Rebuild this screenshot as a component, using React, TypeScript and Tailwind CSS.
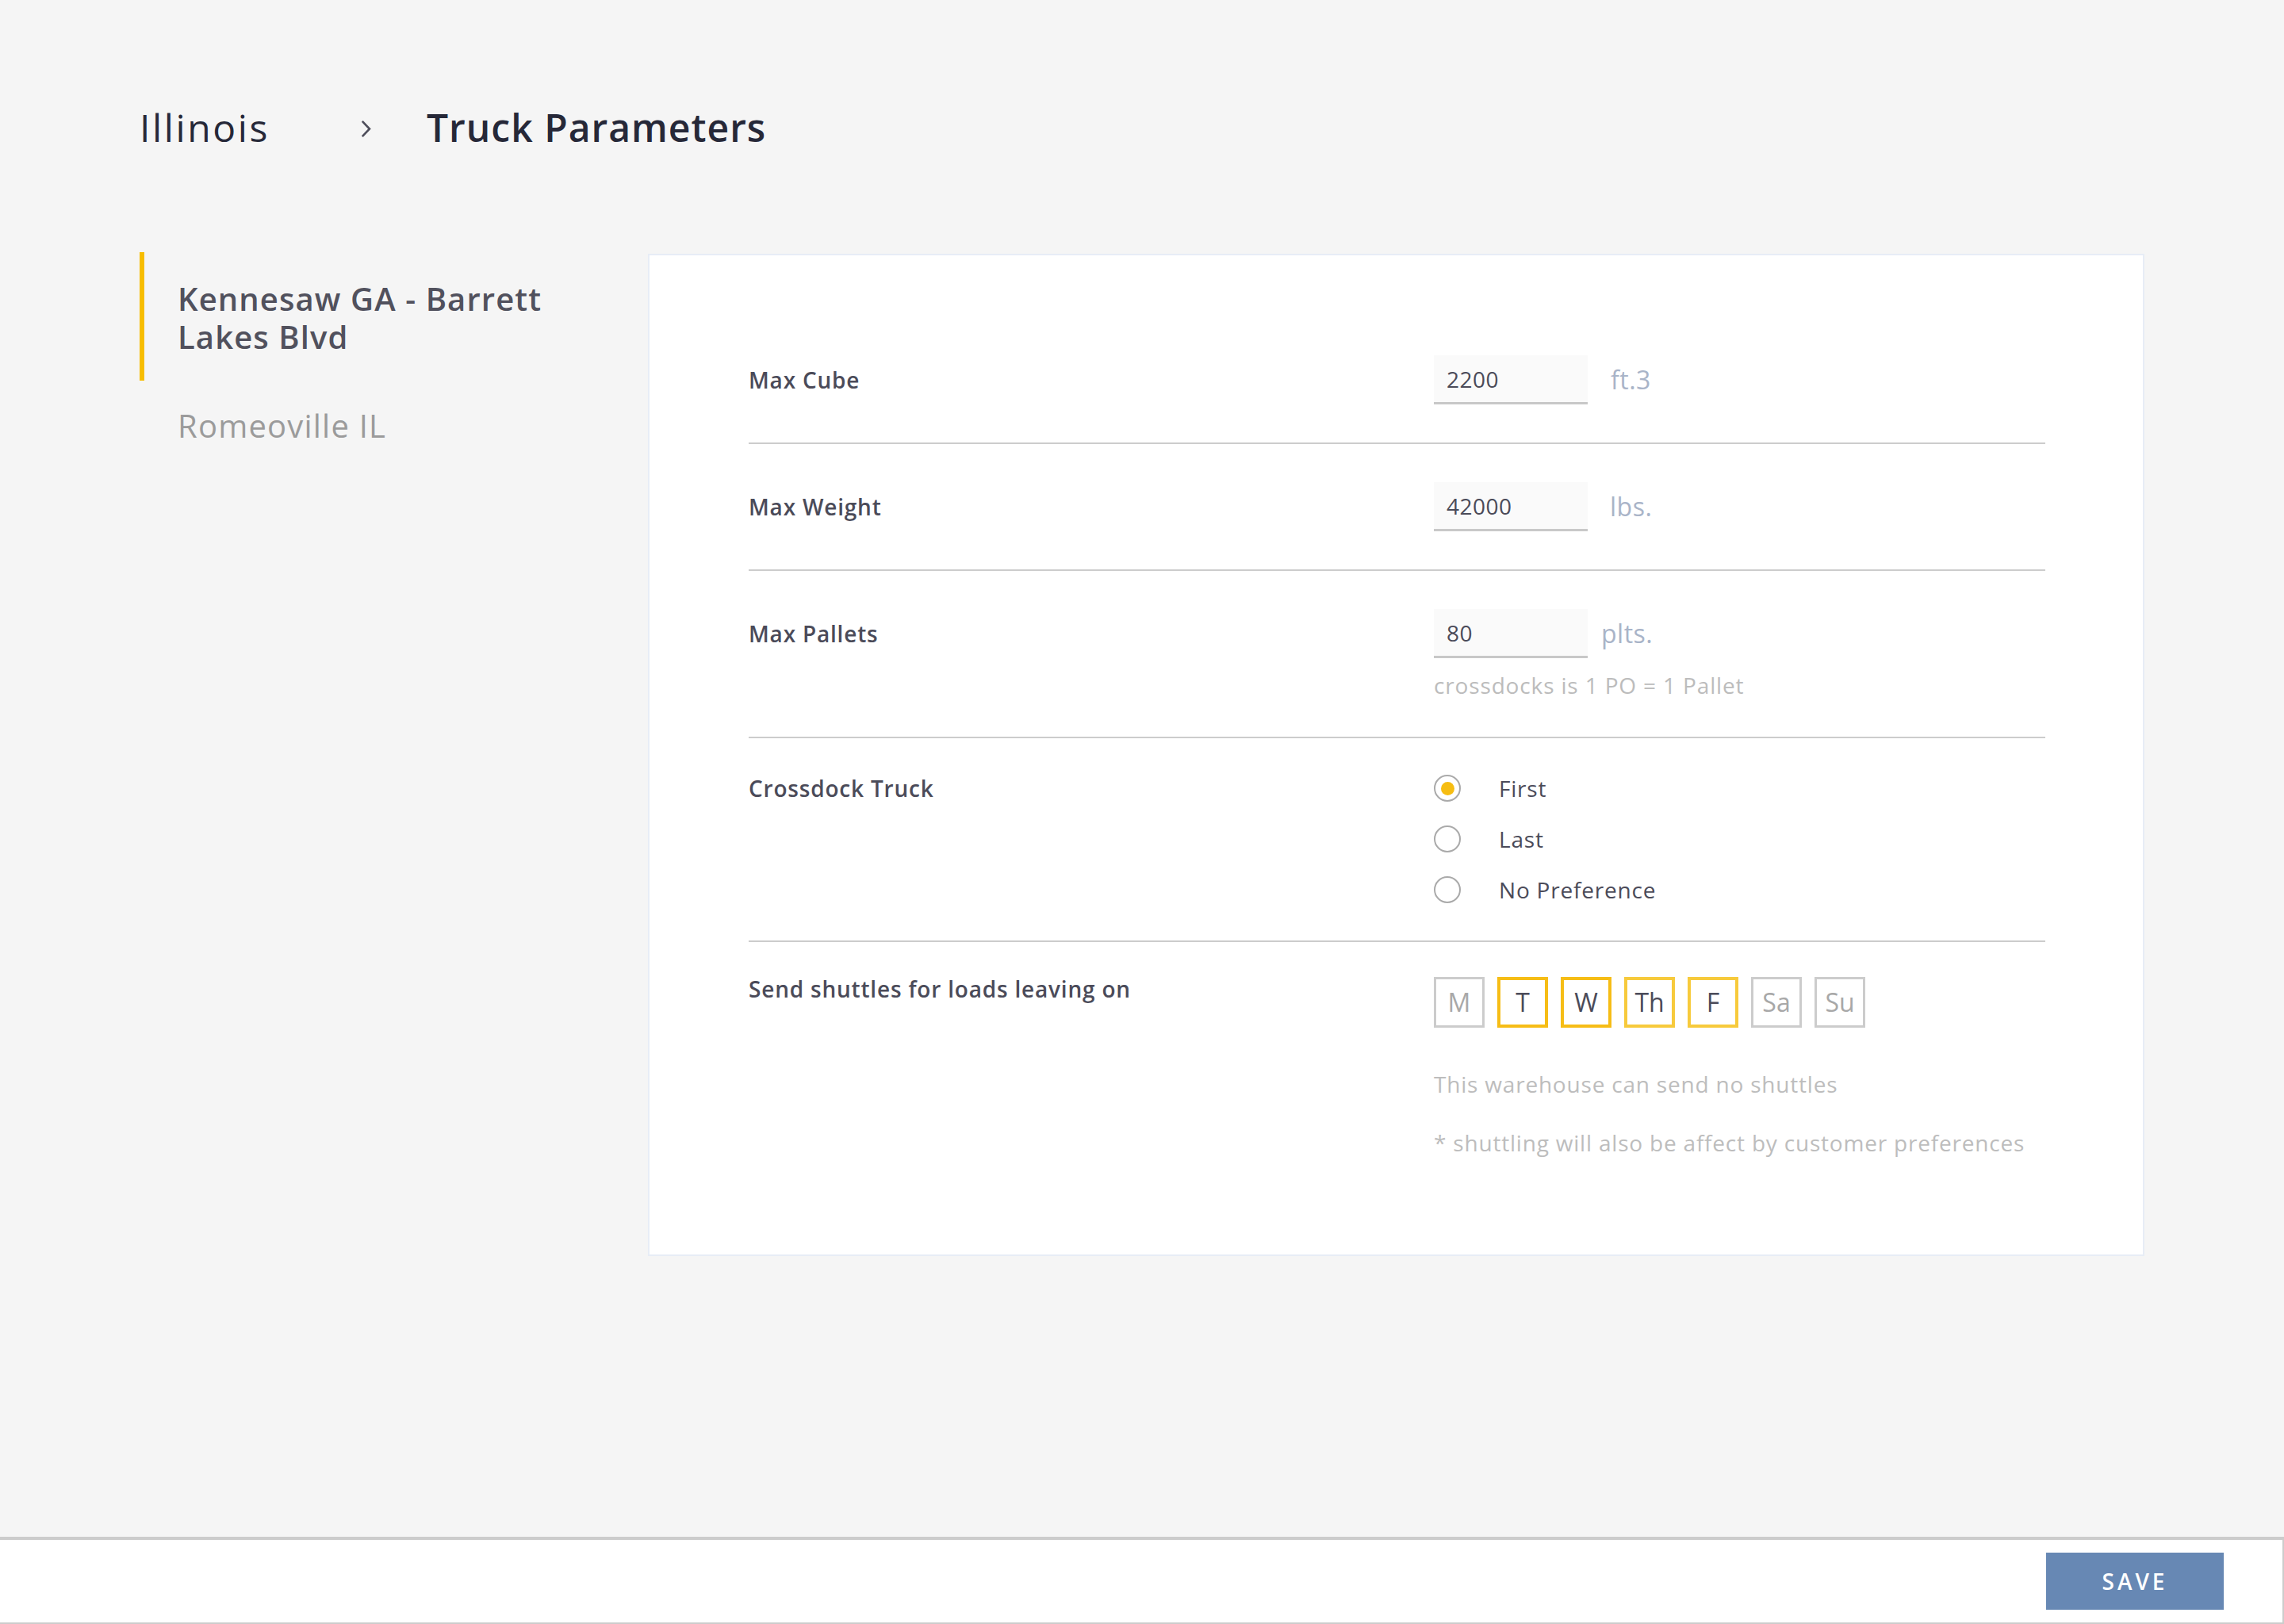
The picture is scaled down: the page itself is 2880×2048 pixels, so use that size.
import React from "react";

const days: { d: string; on: boolean; tone?: "strong" | "soft" }[] = [
  { d: "M", on: false },
  { d: "T", on: true, tone: "strong" },
  { d: "W", on: true, tone: "strong" },
  { d: "Th", on: true, tone: "soft" },
  { d: "F", on: true, tone: "soft" },
  { d: "Sa", on: false },
  { d: "Su", on: false },
];

function NumField({ value, unit, unitClass }: { value: string; unit: string; unitClass: string }) {
  return (
    <div className="flex items-center">
      <div className="w-[194px] h-[62px] bg-[#fafafa] border-b-[3px] border-[#c8c8c8] pl-[16px] flex items-center text-[28px] text-[#4b4b59] tracking-[0.5px]">
        {value}
      </div>
      <span className={`text-[32px] leading-[40px] text-[#a9b4c8] tracking-[0.5px] ${unitClass}`}>{unit}</span>
    </div>
  );
}

function Radio({ label, checked }: { label: string; checked?: boolean }) {
  return (
    <div className="h-[34px] flex items-center">
      <div className="w-[34px] h-[34px] rounded-full border-2 border-[#aaaaaa] flex items-center justify-center bg-white">
        {checked && <div className="w-[17px] h-[17px] rounded-full bg-[#f6bd12]" />}
      </div>
      <span className="ml-[48px] text-[28px] leading-[34px] text-[#4b4b59] tracking-[0.8px]">{label}</span>
    </div>
  );
}

export default function App() {
  return (
    <div className="min-h-screen flex flex-col bg-[#f5f5f5] font-['Open_Sans',sans-serif]">
      <div className="flex-1 px-[176px] pt-[129px]">
        {/* Breadcrumb */}
        <div className="h-[64px] flex items-center">
          <span className="w-[279px] text-[48px] leading-[64px] text-[#262838] tracking-[2.6px]">Illinois</span>
          <svg width="13" height="23" viewBox="0 0 13 23" className="mt-[3px]">
            <path d="M1.8 1.8 L11 11.5 L1.8 21.2" fill="none" stroke="#4d4d5a" strokeWidth="2.6" />
          </svg>
          <span className="ml-[70px] text-[48px] leading-[64px] font-semibold text-[#262838] tracking-[1px]">
            Truck Parameters
          </span>
        </div>

        <div className="flex mt-[125px]">
          {/* Sidebar */}
          <div className="w-[641px] shrink-0">
            <div className="border-l-[6px] border-[#f7bd00] pl-[42px] pt-[35px] pb-[31px]">
              <div className="max-w-[500px] text-[40px] leading-[48px] font-semibold text-[#51515d] tracking-[1.1px]">
                Kennesaw GA - Barrett Lakes Blvd
              </div>
            </div>
            <div className="pl-[48px] pt-[33px] text-[40px] leading-[48px] text-[#9b9b9b] tracking-[1.2px]">
              Romeoville IL
            </div>
          </div>

          {/* Card */}
          <div className="flex-1 mt-[2px] bg-white border-2 border-[#e7edf6] pl-[125px] pr-[123px] pt-[78px] pb-[121px]">
            {/* Max Cube */}
            <div className="flex pt-[48px] pb-[48px] border-b-2 border-[#cccccc]">
              <div className="w-[864px] shrink-0 h-[62px] flex items-center text-[28px] font-semibold text-[#4b4b59] tracking-[0.8px]">
                Max Cube
              </div>
              <NumField value="2200" unit="ft.3" unitClass="ml-[29px]" />
            </div>
            {/* Max Weight */}
            <div className="flex pt-[48px] pb-[48px] border-b-2 border-[#cccccc]">
              <div className="w-[864px] shrink-0 h-[62px] flex items-center text-[28px] font-semibold text-[#4b4b59] tracking-[0.8px]">
                Max Weight
              </div>
              <NumField value="42000" unit="lbs." unitClass="ml-[28px]" />
            </div>
            {/* Max Pallets */}
            <div className="flex pt-[48px] pb-[45px] border-b-2 border-[#cccccc]">
              <div className="w-[864px] shrink-0 h-[62px] flex items-center text-[28px] font-semibold text-[#4b4b59] tracking-[0.8px]">
                Max Pallets
              </div>
              <div className="flex flex-col">
                <NumField value="80" unit="plts." unitClass="ml-[17px]" />
                <div className="mt-[14px] text-[28px] leading-[40px] text-[#bcbcbc] tracking-[0.85px]">
                  crossdocks is 1 PO = 1 Pallet
                </div>
              </div>
            </div>
            {/* Crossdock Truck */}
            <div className="flex pt-[46px] pb-[47px] border-b-2 border-[#cccccc]">
              <div className="w-[864px] shrink-0 text-[28px] leading-[34px] font-semibold text-[#4b4b59] tracking-[0.8px]">
                Crossdock Truck
              </div>
              <div className="flex flex-col gap-[30px]">
                <Radio label="First" checked />
                <Radio label="Last" />
                <Radio label="No Preference" />
              </div>
            </div>
            {/* Shuttles */}
            <div className="flex pt-[44px]">
              <div className="w-[864px] shrink-0 text-[28px] leading-[30px] font-semibold text-[#4b4b59] tracking-[0.8px]">
                Send shuttles for loads leaving on
              </div>
              <div className="flex flex-col">
                <div className="flex gap-[16px]">
                  {days.map((x) => (
                    <div
                      key={x.d}
                      className={
                        x.on
                          ? x.tone === "strong"
                            ? "w-[64px] h-[64px] border-[4px] border-[#f6bd16] flex items-center justify-center text-[32px] text-[#4b4b59]"
                            : "w-[64px] h-[64px] border-[4px] border-[#f7ca3c] flex items-center justify-center text-[32px] text-[#4b4b59]"
                          : "w-[64px] h-[64px] border-[3px] border-[#cccccc] flex items-center justify-center text-[32px] text-[#a8a8a8]"
                      }
                    >
                      {x.d}
                    </div>
                  ))}
                </div>
                <div className="mt-[51px] text-[28px] leading-[40px] text-[#bdbdbd] tracking-[0.8px]">
                  This warehouse can send no shuttles
                </div>
                <div className="mt-[34px] text-[28px] leading-[40px] text-[#bdbdbd] tracking-[0.8px]">
                  * shuttling will also be affect by customer preferences
                </div>
              </div>
            </div>
          </div>
        </div>
      </div>

      {/* Footer */}
      <div className="h-[110px] shrink-0 bg-white border-t-4 border-r-2 border-b-2 border-[#cccccc] flex items-center justify-end pr-[74px]">
        <button className="w-[224px] h-[72px] bg-[#6788b4] text-white text-[28px] font-semibold tracking-[4px] flex items-center justify-center">
          SAVE
        </button>
      </div>
    </div>
  );
}
